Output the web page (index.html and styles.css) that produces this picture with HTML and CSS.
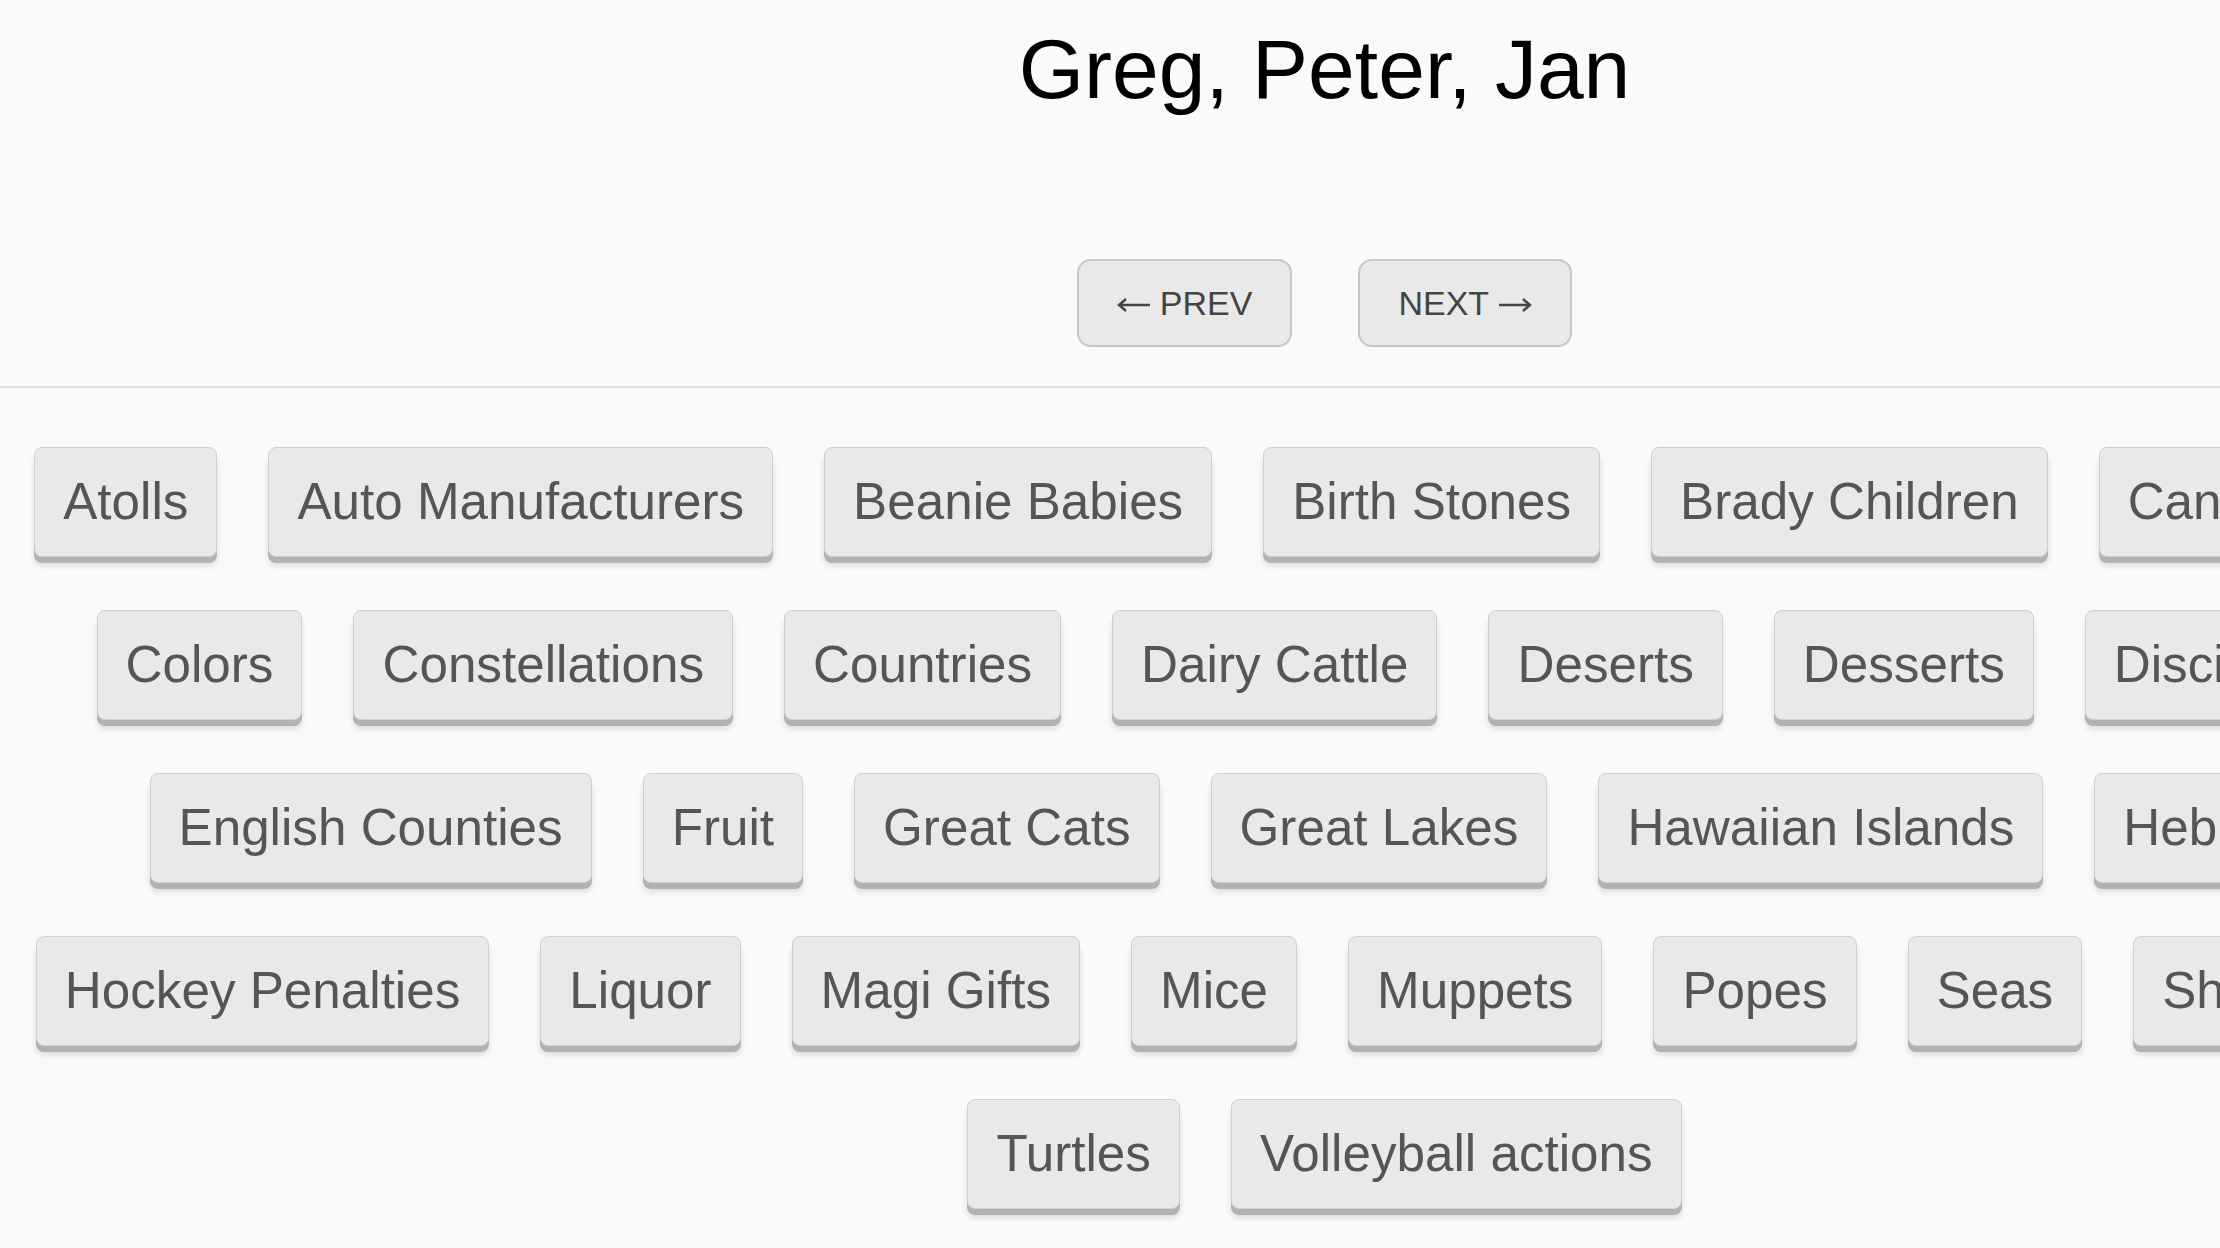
FILE: index.html
```html
<!DOCTYPE html>
<html lang="en">
<head>
    <meta charset="UTF-8">
    <meta name="viewport" content="width=device-width, initial-scale=1.0">
    <title>Greg, Peter, Jan</title>
    <link rel="stylesheet" href="styles.css">
</head>
<body>
    <div class="page">
        <div class="top">
            <h1 class="answer">Greg, Peter, Jan</h1>
            <div class="pager">
                <button class="pager-btn">
                    <svg class="arrow" width="34" height="16" viewBox="0 0 34 16"><path d="M33 8H2M9 2L2 8L9 14"/></svg>
                    PREV
                </button>
                <button class="pager-btn">
                    NEXT
                    <svg class="arrow" width="34" height="16" viewBox="0 0 34 16"><path d="M1 8H32M25 2L32 8L25 14"/></svg>
                </button>
            </div>
        </div>

        <!-- Categories -->
        <div class="topics">
            <div class="topic-row">
                <button class="topic">Atolls</button>
                <button class="topic">Auto Manufacturers</button>
                <button class="topic">Beanie Babies</button>
                <button class="topic">Birth Stones</button>
                <button class="topic">Brady Children</button>
                <button class="topic">Canadian Provinces</button>
            </div>
            <div class="topic-row">
                <button class="topic">Colors</button>
                <button class="topic">Constellations</button>
                <button class="topic">Countries</button>
                <button class="topic">Dairy Cattle</button>
                <button class="topic">Deserts</button>
                <button class="topic">Desserts</button>
                <button class="topic">Disciples of Jesus</button>
            </div>
            <div class="topic-row">
                <button class="topic">English Counties</button>
                <button class="topic">Fruit</button>
                <button class="topic">Great Cats</button>
                <button class="topic">Great Lakes</button>
                <button class="topic">Hawaiian Islands</button>
                <button class="topic">Hebrew Letters</button>
            </div>
            <div class="topic-row">
                <button class="topic">Hockey Penalties</button>
                <button class="topic">Liquor</button>
                <button class="topic">Magi Gifts</button>
                <button class="topic">Mice</button>
                <button class="topic">Muppets</button>
                <button class="topic">Popes</button>
                <button class="topic">Seas</button>
                <button class="topic">Sharks</button>
                <button class="topic">Spices</button>
            </div>
            <div class="topic-row">
                <button class="topic">Turtles</button>
                <button class="topic">Volleyball actions</button>
            </div>
        </div>
    </div>
</body>
</html>
```

FILE: styles.css
```css
html {
    overflow: hidden;
}
body {
    font-family: "Liberation Sans", Helvetica, Arial, sans-serif;
    margin: 0;
    padding: 0;
    background-color: #fafafa;
}
.page {
    width: 2649px;
}
.top {
    text-align: center;
    padding: 21px 0 39px;
    border-bottom: 2px solid #e2e2e2;
}
.answer {
    margin: 0 0 141px;
    font-size: 84px;
    font-weight: normal;
    color: #000;
}
.pager {
    display: flex;
    justify-content: center;
    gap: 66px;
}
.pager-btn {
    display: flex;
    align-items: center;
    gap: 9px;
    font-family: inherit;
    font-size: 34px;
    line-height: 40px;
    padding: 22px 38px;
    color: #444;
    background-color: #e9e9e9;
    border: 2px solid #c8c8c8;
    border-radius: 14px;
    cursor: pointer;
}
.pager-btn:hover {
    background-color: #e0e0e0;
}
.arrow {
    fill: none;
    stroke: #444;
    stroke-width: 2.4;
    margin-top: 3px;
}
.topics {
    padding: 59px 0 40px;
    display: flex;
    flex-direction: column;
    gap: 53px;
}
.topic-row {
    display: flex;
    justify-content: center;
    gap: 51px;
}
.topic {
    font-family: inherit;
    font-size: 51.2px;
    line-height: 58px;
    padding: 25px 28px;
    color: #555;
    background-color: #e9e9e9;
    border: 1px solid #d0d0d0;
    border-radius: 8px;
    box-shadow: 0 6px 0 #b2b2b2, 0 9px 6px rgba(0, 0, 0, 0.12);
    white-space: nowrap;
    cursor: pointer;
}
.topic:hover {
    background-color: #e2e2e2;
}
```
